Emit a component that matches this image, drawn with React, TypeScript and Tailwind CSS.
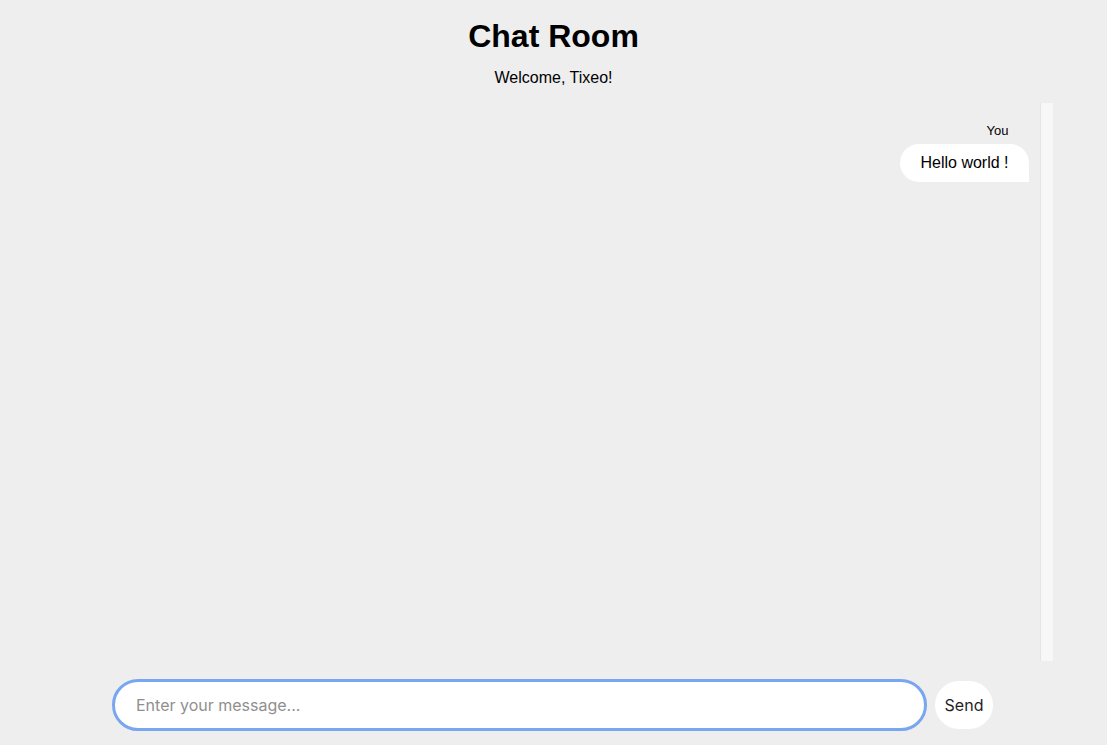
import React from 'react';

const App = () => {
  return (
    <div className="h-screen bg-[#eeeeee] flex flex-col items-center font-['Liberation_Sans',Arial,sans-serif] text-black">
      {/* Header */}
      <h1 className="pt-[18px] text-[32px] leading-[37px] font-bold">Chat Room</h1>
      <p className="mt-[14px] text-base leading-[18px]">Welcome, Tixeo!</p>

      {/* Messages */}
      <div className="mt-[16px] mr-[2px] w-[1000px] flex-1 min-h-0 flex">
        <div className="flex-1 flex flex-col items-end pt-[20px] pr-[11px]">
          <span className="text-[13px] leading-[15px] mr-5">You</span>
          <div className="mt-[6px] bg-white rounded-[20px] rounded-br-none px-5 py-[10px] text-base leading-[18px]">
            Hello world !
          </div>
        </div>
        <div className="w-[13px] bg-[#f7f7f7] border-l border-[#e4e4e4]" />
      </div>

      {/* Composer */}
      <form className="mt-[18px] mb-[14px] mr-[2px] flex items-center gap-2 font-['Inter',sans-serif]">
        <input
          className="w-[815px] h-[52px] rounded-full border-[3px] border-[#79a6f0] bg-white pl-[21px] pr-4 text-base outline-none placeholder:text-[#8f8f8f]"
          placeholder="Enter your message..."
        />
        <button type="button" className="h-12 w-[58px] rounded-full bg-white text-base text-[#1f1f1f]">
          Send
        </button>
      </form>
    </div>
  );
};

export default App;
